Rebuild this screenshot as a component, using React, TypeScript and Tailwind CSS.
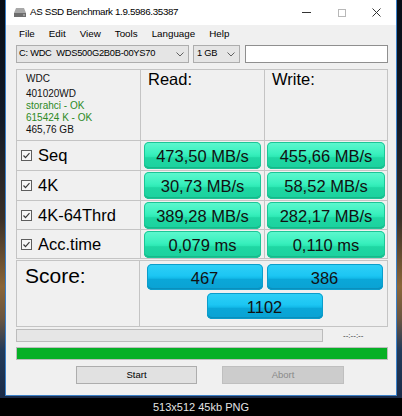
import React from "react";

function Check() {
  return (
    <svg width="11" height="11" viewBox="0 0 11 11" className="shrink-0">
      <rect x="0.5" y="0.5" width="10" height="10" fill="#f7f7f7" stroke="#5e5e5e" />
      <path d="M2.5 5.5 L4.5 7.6 L8.5 3.2" stroke="#3a3a3a" strokeWidth="1.2" fill="none" />
    </svg>
  );
}

function Chevron() {
  return (
    <svg width="8" height="5" viewBox="0 0 8 5">
      <path d="M0.5 0.5 L4 4 L7.5 0.5" stroke="#606060" strokeWidth="1" fill="none" />
    </svg>
  );
}

function Green({ children }: { children: React.ReactNode }) {
  return (
    <div className="h-[27px] w-full rounded-[5px] flex items-center justify-center pt-[2px] text-[16.5px] text-[#111] bg-[linear-gradient(to_bottom,#5ff8cf_0%,#38f0bd_45%,#2ce8b3_55%,#1fd7a3_58%,#1bd19e_100%)] shadow-[inset_0_0_0_1px_#1cc596,inset_0_-2px_0_#17b98a]">
      {children}
    </div>
  );
}

function Blue({ children }: { children: React.ReactNode }) {
  return (
    <div className="h-[26px] w-[116px] rounded-[5px] flex items-center justify-center pt-[2px] text-[16.5px] text-[#111] bg-[linear-gradient(to_bottom,#2fd0f7_0%,#1cc6f3_45%,#12b9e8_55%,#0aa7d8_58%,#0aa2d3_100%)] shadow-[inset_0_0_0_1px_#0b9dcb,inset_0_-2px_0_#0a8fbd]">
      {children}
    </div>
  );
}

function Row({ label, read, write, h }: { label: string; read: string; write: string; h: string }) {
  return (
    <>
      <div className={`${h} border-r border-b border-[#c4c4c4] flex items-center pl-[4px] gap-[6px] text-[16.5px] text-black`}>
        <Check />
        <span>{label}</span>
      </div>
      <div className={`${h} border-r border-b border-[#c4c4c4] flex items-center pl-[3px] pr-[3px]`}>
        <Green>{read}</Green>
      </div>
      <div className={`${h} border-r border-b border-[#c4c4c4] flex items-center pl-[2px] pr-[2px]`}>
        <Green>{write}</Green>
      </div>
    </>
  );
}

export default function App() {
  return (
    <div className="w-[402px] h-[416px] bg-black flex flex-col font-['Liberation_Sans',Arial,sans-serif] overflow-hidden">
      <div className="h-[398px] flex px-[5px] pb-[2px] bg-[linear-gradient(to_bottom,#070d16_0%,#121a28_30%,#3a3028_55%,#8a6538_72%,#6a5540_80%,#223a5a_88%,#1a2b48_100%)]">
        <div className="flex-1 flex flex-col bg-[#f0f0f0] border-x border-b border-[#3a80c8]">
          {/* Title bar */}
          <div className="h-[25px] bg-white flex items-center">
            <div className="pl-[8px] flex items-center">
              <svg width="12" height="9" viewBox="0 0 12 9">
                <path d="M2 0 H10 L12 5 H0 Z" fill="#a8a8a8" />
                <rect x="0" y="5" width="12" height="4" fill="#6e6e6e" />
                <rect x="9" y="6.5" width="2" height="1" fill="#c8c8c8" />
              </svg>
            </div>
            <span className="ml-[4px] text-[9.8px] tracking-[-0.35px] text-black">AS SSD Benchmark 1.9.5986.35387</span>
            <div className="ml-auto flex h-full pr-[2px]">
              <div className="w-[35px] h-full flex items-center justify-center">
                <div className="w-[9px] h-[1px] bg-[#333]" />
              </div>
              <div className="w-[35px] h-full flex items-center justify-center">
                <div className="w-[8px] h-[8px] border border-[#b8b8b8]" />
              </div>
              <div className="w-[35px] h-full flex items-center justify-center">
                <svg width="9" height="9" viewBox="0 0 9 9">
                  <path d="M0.5 0.5 L8.5 8.5 M8.5 0.5 L0.5 8.5" stroke="#333" strokeWidth="1" />
                </svg>
              </div>
            </div>
          </div>

          {/* Menu */}
          <div className="h-[19px] flex items-center pl-[13px] gap-[14px] text-[9.8px] text-black">
            <span>File</span>
            <span>Edit</span>
            <span>View</span>
            <span>Tools</span>
            <span>Language</span>
            <span>Help</span>
          </div>

          {/* Combos */}
          <div className="mt-[1px] h-[18px] flex pl-[10px] text-[9.3px] tracking-[-0.25px] text-black">
            <div className="w-[173px] h-full border border-[#adadad] bg-[#e5e5e5] flex items-center pl-[2px] pr-[4px]">
              <span>C: WDC&nbsp;&nbsp;WDS500G2B0B-00YS70</span>
              <span className="ml-auto flex"><Chevron /></span>
            </div>
            <div className="ml-[4px] w-[47px] h-full border border-[#adadad] bg-[#e5e5e5] flex items-center pl-[3px] pr-[4px]">
              <span>1 GB</span>
              <span className="ml-auto flex"><Chevron /></span>
            </div>
            <div className="ml-[5px] w-[143px] h-full border border-[#8f8f8f] bg-white" />
          </div>

          {/* Table */}
          <div className="mt-[6px] ml-[10px] w-[372px] border-l border-t border-[#c4c4c4] grid grid-cols-[124px_124px_123px]">
            <div className="h-[71px] border-r border-b border-[#c4c4c4] pl-[9px] pt-[3px] text-[10px] leading-[12px] text-[#111]">
              <div className="mb-[3px]">WDC</div>
              <div>401020WD</div>
              <div className="text-[#2d8a26]">storahci - OK</div>
              <div className="text-[#2d8a26]">615424 K - OK</div>
              <div>465,76 GB</div>
            </div>
            <div className="h-[71px] border-r border-b border-[#c4c4c4] pl-[7px] text-[16.5px] leading-[19px] text-black">Read:</div>
            <div className="h-[71px] border-r border-b border-[#c4c4c4] pl-[7px] text-[16.5px] leading-[19px] text-black">Write:</div>
            <Row label="Seq" read="473,50 MB/s" write="455,66 MB/s" h="h-[30px]" />
            <Row label="4K" read="30,73 MB/s" write="58,52 MB/s" h="h-[30px]" />
            <Row label="4K-64Thrd" read="389,28 MB/s" write="282,17 MB/s" h="h-[29px]" />
            <Row label="Acc.time" read="0,079 ms" write="0,110 ms" h="h-[29px]" />
          </div>

          {/* Score */}
          <div className="mt-[1px] ml-[10px] w-[372px] h-[67px] border border-[#c4c4c4] flex">
            <div className="w-[123px] border-r border-[#c4c4c4] pl-[8px] pt-[3px] text-[21px] leading-[24px] text-black">Score:</div>
            <div className="flex-1 flex flex-col items-center pt-[3px] gap-[3px] pl-[2px]">
              <div className="flex gap-[4px]">
                <Blue>467</Blue>
                <Blue>386</Blue>
              </div>
              <Blue>1102</Blue>
            </div>
          </div>

          {/* Progress */}
          <div className="mt-[2px] ml-[10px] h-[13px] flex items-center">
            <div className="w-[307px] h-full border border-[#bcbcbc] bg-[#e6e6e6]" />
            <span className="ml-[20px] text-[8px] text-[#333]">--:--:--</span>
          </div>

          <div className="mt-[5px] ml-[10px] w-[372px] h-[13px] border border-[#bcbcbc] bg-[#06b026]" />

          {/* Buttons */}
          <div className="mt-[6px] h-[18px] flex pl-[70px] gap-[25px] text-[9.5px]">
            <div className="w-[121px] h-full border border-[#adadad] bg-[#e1e1e1] flex items-center justify-center text-black">Start</div>
            <div className="w-[122px] h-full border border-[#bfbfbf] bg-[#cccccc] flex items-center justify-center text-[#8a8a8a]">Abort</div>
          </div>
        </div>
      </div>
      <div className="flex-1 flex items-center justify-center text-[11px] text-[#e4e4e4]">513x512 45kb PNG</div>
    </div>
  );
}
